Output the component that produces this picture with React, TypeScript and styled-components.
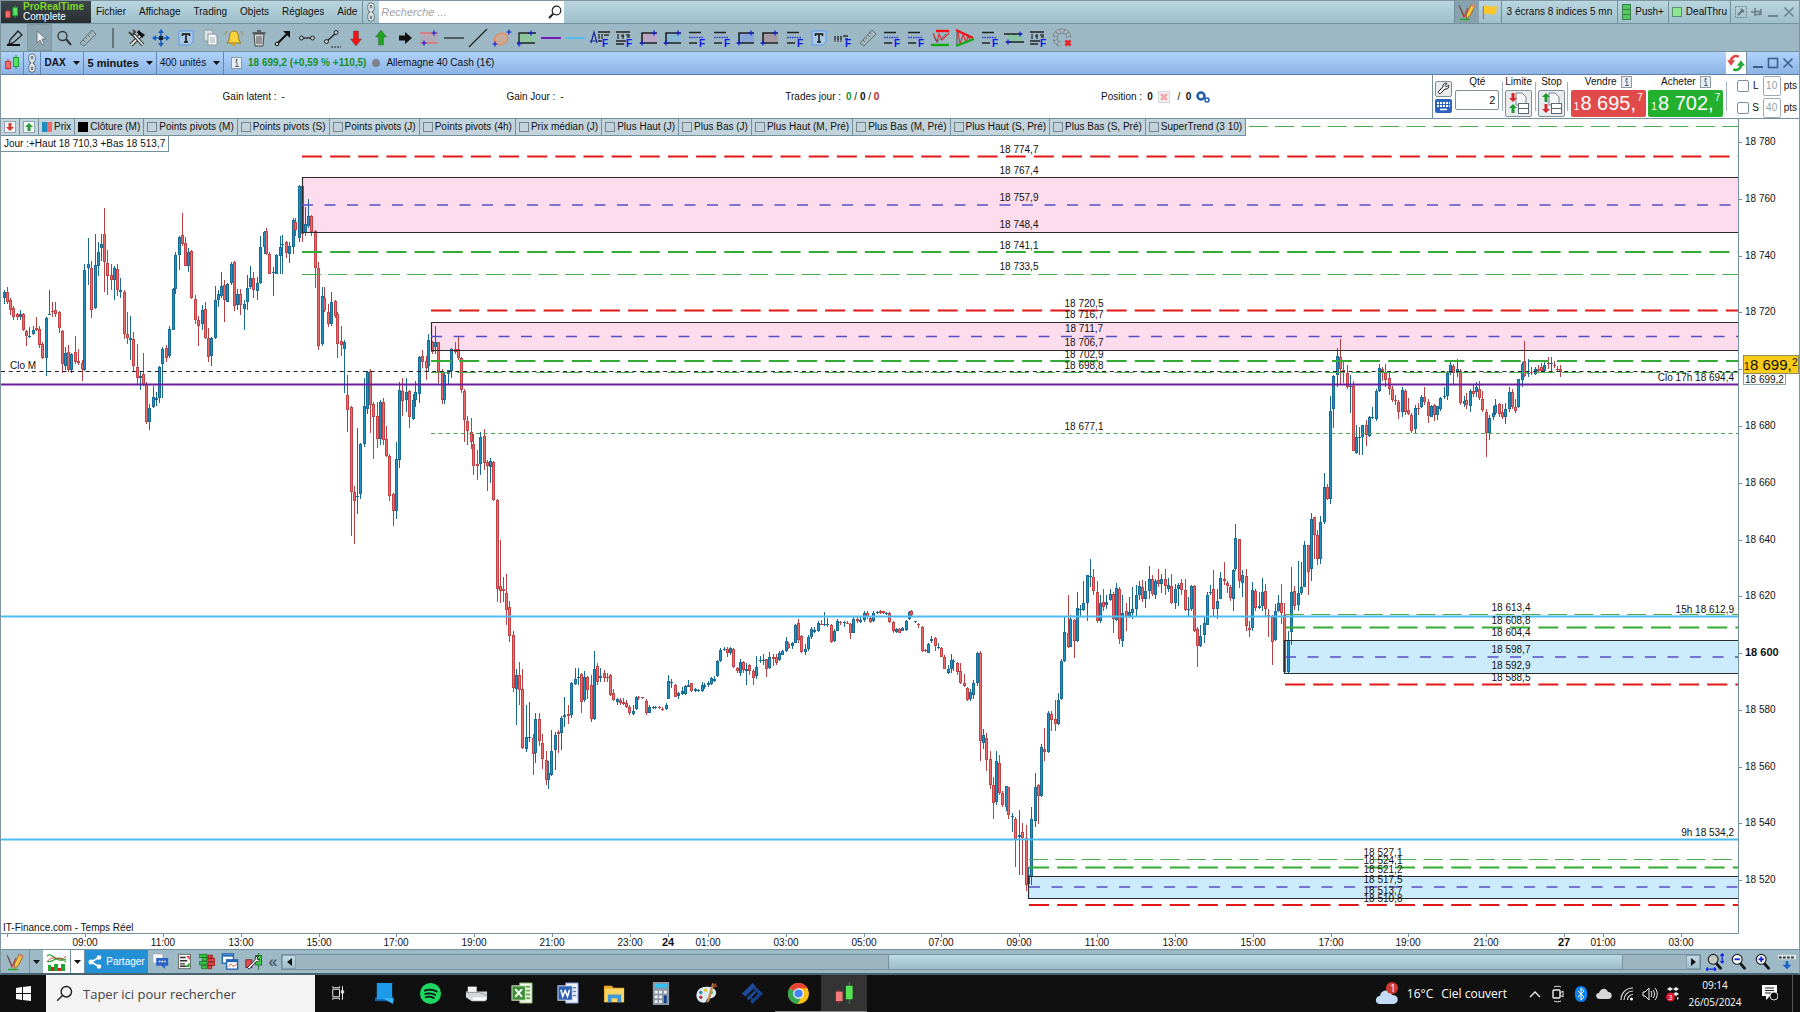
import React from "react";
import styled, { createGlobalStyle, css } from "styled-components";

const SANS = '"Liberation Sans", Arial, sans-serif';
const UI = '"Open Sans", "Noto Sans", sans-serif';
const EDGE = "#73909d";

const Global = createGlobalStyle`
  * { box-sizing: border-box; }
  body { margin: 0; background: #fff; font: 10px/12px ${SANS}; color: #111; }
  button, input, select { font: inherit; color: inherit; margin: 0; padding: 0; border: 0; background: none; border-radius: 0; }
  svg { display: block; flex: none; }
`;

/* ------------------------------------------------------------------ */
/* Layout                                                              */
/* ------------------------------------------------------------------ */

const Screen = styled.div`
  display: flex;
  flex-direction: column;
  height: 100vh;
  overflow: hidden;
`;
const Platform = styled.main`
  flex: 1;
  min-height: 0;
  display: flex;
  flex-direction: column;
  border: 1px solid #7f959f;
  border-bottom: 2px solid #476370;
`;
const MenuBar = styled.header`
  display: flex;
  height: 23px;
  background: linear-gradient(#b9d6e0, #9fbfca);
  border-bottom: 1px solid ${EDGE};
`;
const Brand = styled.div`
  display: flex;
  align-items: center;
  gap: 4px;
  width: 90px;
  padding-left: 3px;
  background: linear-gradient(#3c464b, #272e32);
  color: #fff;
  line-height: 10px;
`;
const BrandName = styled.div`
  color: #7fd62c;
  font-weight: bold;
`;
const Menus = styled.nav`
  display: flex;
  align-items: center;
  gap: 13px;
  padding: 0 5px;
`;
const Search = styled.label`
  display: flex;
  align-items: center;
  width: 185px;
  padding: 0 2px;
  background: #fff;
`;
const SearchInput = styled.input`
  flex: 1;
  min-width: 0;
  outline: none;
  font: italic 11px/14px ${SANS};
  &::placeholder { color: #a4a4a4; opacity: 1; }
`;
const Spacer = styled.div`
  flex: 1;
`;
const Cell = styled.div<{ $pressed?: boolean; $narrow?: boolean }>`
  display: flex;
  align-items: center;
  justify-content: center;
  gap: 4px;
  padding: 0 ${(p) => (p.$narrow ? 3 : 4)}px;
  border-left: 1px solid ${EDGE};
  background: ${(p) => (p.$pressed ? "#87a2ae" : "transparent")};
`;
const CellButton = styled(Cell).attrs({ as: "button" })``;
const Scene = styled(CellButton)`
  padding: 0 5px;
`;
const IconButton = styled.button<{ $pressed?: boolean }>`
  display: flex;
  align-items: center;
  justify-content: center;
  ${(p) => p.$pressed && css`background: #8aa4b0; outline: 1px solid #7d97a3; outline-offset: -1px;`}
`;
const WindowButtons = styled.div`
  display: flex;
  align-items: center;
  gap: 3px;
  padding: 0 5px;
`;

const ToolBar = styled.div`
  height: 28px;
  background: #9bb8c4;
  border-bottom: 1px solid ${EDGE};
`;
const ToolRow = styled.div`
  display: flex;
  max-width: 1074px;
  height: 100%;
  padding-left: 2px;
  & > * { flex: 1; }
`;

const TitleBar = styled.div`
  display: flex;
  height: 23px;
  background: linear-gradient(#b0d3fc, #8db3e4);
  border-bottom: 1px solid #5c80ab;
`;
const TitleCell = styled.div<{ $w: number }>`
  display: flex;
  align-items: center;
  justify-content: center;
  gap: 6px;
  width: ${(p) => p.$w}px;
  border-right: 1px solid #6387b0;
`;
const Pick = styled.select<{ $bold?: boolean; $big?: boolean }>`
  appearance: none;
  font-size: ${(p) => (p.$big ? 11 : 10)}px;
  font-weight: ${(p) => (p.$bold ? "bold" : "normal")};
`;
const Quote = styled.div`
  display: flex;
  align-items: center;
  gap: 6px;
  padding: 0 7px;
`;
const Green = styled.b`
  color: #16912a;
`;
const Red = styled.b`
  color: #c8202a;
`;

const TradeRow = styled.section`
  display: flex;
  height: 44px;
  border-bottom: 1px solid ${EDGE};
`;
const Stats = styled.div`
  flex: 1;
  display: flex;
  align-items: center;
  justify-content: space-evenly;
`;
const Stat = styled.div`
  display: flex;
  align-items: center;
  gap: 5px;
`;
const OrderPanel = styled.form`
  display: flex;
  width: 367px;
  padding: 0 2px;
  gap: 2px;
  border-left: 1px solid ${EDGE};
`;
const Stack = styled.div<{ $w: number }>`
  display: flex;
  flex-direction: column;
  align-items: center;
  gap: 2px;
  width: ${(p) => p.$w}px;
`;
const Tools = styled(Stack)`
  justify-content: center;
`;
const Caption = styled.label`
  display: flex;
  align-items: center;
  gap: 4px;
  height: 13px;
`;
const SquareButton = styled.button`
  display: flex;
  align-items: center;
  justify-content: center;
  width: 17px;
  height: 16px;
  border: 1px solid #7f8d96;
  border-radius: 2px;
  background: #e8ecef;
`;
const OrderButton = styled(SquareButton)`
  width: 27px;
  height: 27px;
`;
const Qty = styled.input`
  width: 44px;
  height: 20px;
  padding-right: 3px;
  border: 1px solid #7d8f9c;
  border-radius: 2px;
  text-align: right;
  font-size: 11px;
`;
const Rule = styled.div`
  width: 1px;
  margin: 7px 0;
  background: #9db0bb;
`;
const PriceButton = styled.button<{ $c: string }>`
  display: flex;
  justify-content: space-between;
  width: 75px;
  height: 27px;
  padding: 0 3px;
  border-radius: 2px;
  background: ${(p) => p.$c};
  color: #fff;
  font-size: 20px;
  line-height: 26px;
  white-space: pre;
`;
const Tiny = styled.small<{ $low?: boolean }>`
  font-size: 10px;
  line-height: ${(p) => (p.$low ? 34 : 16)}px;
`;
const Guards = styled.div`
  display: flex;
  flex-direction: column;
  justify-content: center;
  gap: 2px;
  padding-left: 8px;
`;
const Guard = styled.div`
  display: flex;
  align-items: center;
  gap: 3px;
`;
const GuardLabel = styled.label`
  width: 8px;
  text-align: center;
`;
const GuardBox = styled.input`
  appearance: none;
  width: 12px;
  height: 12px;
  border: 1px solid #7d8f9c;
  border-radius: 2px;
  background: #fff;
`;
const GuardValue = styled.input`
  width: 18px;
  height: 20px;
  border: 1px solid #9aaab4;
  border-radius: 2px;
  color: #90a0aa;
  text-align: center;
`;

const ChartArea = styled.section`
  position: relative;
  flex: 1;
  min-height: 0;
`;
const ChartSvg = styled.svg`
  width: 100%;
  height: 100%;
`;
const Overlay = styled.div`
  position: absolute;
  top: -1px;
  left: 0;
`;
const Legend = styled.div`
  display: flex;
  width: max-content;
  height: 18px;
  border: 1px solid ${EDGE};
  border-left: 0;
  background: #c3d3db;
`;
const LegendItem = styled.label`
  display: flex;
  align-items: center;
  gap: 2px;
  padding: 0 3px;
  white-space: nowrap;
  & + & { border-left: 1px solid ${EDGE}; }
`;
const LegendBox = styled.input`
  appearance: none;
  width: 10px;
  height: 10px;
  border: 1px solid #75858e;
  &:checked { border: 0; background: #000; }
`;
const PriceBox = styled(LegendBox)`
  &:checked { background: linear-gradient(90deg, #1a8cc0 50%, #f06a6a 50%); }
`;
const DayRange = styled.div`
  width: max-content;
  height: 16px;
  padding: 2px 3px;
  border: 1px solid ${EDGE};
  border-top: 0;
  border-left: 0;
  background: #fff;
`;

const BottomBar = styled.footer`
  display: flex;
  height: 24px;
  border-top: 1px solid ${EDGE};
  background: #9cb9c5;
`;
const BottomButton = styled.button<{ $w: number; $white?: boolean }>`
  display: flex;
  align-items: center;
  justify-content: center;
  width: ${(p) => p.$w}px;
  background: ${(p) => (p.$white ? "#fff" : "none")};
  border-right: ${(p) => (p.$white ? `1px solid ${EDGE}` : 0)};
  font-size: 16px;
  color: #35444c;
`;
const Share = styled.button`
  display: flex;
  align-items: center;
  justify-content: center;
  gap: 4px;
  width: 63px;
  background: #2490d6;
  color: #fff;
`;
const ScrollBar = styled.div`
  flex: 1;
  display: flex;
  height: 16px;
  margin: 4px 2px 0 0;
  border: 1px solid ${EDGE};
  background: #9cb6c2;
`;
const ScrollEnd = styled.button`
  display: flex;
  align-items: center;
  justify-content: center;
  width: 14px;
  border: 1px solid #86a0ad;
  background: linear-gradient(#c3dbe4, #a0bdc9);
`;
const Track = styled.div`
  flex: 1;
  display: grid;
  grid-template-columns: 592fr 736fr 63fr;
`;
const Thumb = styled.div`
  grid-column: 2;
  border: solid ${EDGE};
  border-width: 0 1px;
  background: linear-gradient(#bcdbe6, #9dbcc9);
`;

const TaskBar = styled.footer`
  display: flex;
  align-items: stretch;
  height: 37px;
  background: #101010;
  color: #fff;
  font-family: ${UI};
`;
const TaskSearch = styled.label`
  display: flex;
  align-items: center;
  gap: 10px;
  width: 269px;
  padding: 0 10px;
  background: #f3f3f3;
`;
const TaskInput = styled.input`
  flex: 1;
  min-width: 0;
  outline: none;
  font-size: 13px;
  line-height: 20px;
  &::placeholder { color: #444; opacity: 1; }
`;
const TaskButton = styled.button<{ $active?: boolean; $line?: boolean }>`
  display: flex;
  align-items: center;
  justify-content: center;
  width: 46px;
  background: ${(p) => (p.$active ? "#343434" : "none")};
  border-bottom: 1px solid ${(p) => (p.$line ? "#8a8a8a" : "transparent")};
`;
const Tray = styled.div`
  display: flex;
  align-items: center;
`;
const TrayButton = styled(IconButton)`
  width: 23px;
`;
const Weather = styled.button`
  display: flex;
  align-items: center;
  gap: 8px;
  margin-right: 16px;
  font-size: 12px;
`;
const Clock = styled.time`
  width: 62px;
  font-size: 10px;
  line-height: 17px;
  text-align: center;
`;
const ShowDesktop = styled.button`
  width: 8px;
  border-left: 1px solid #555;
`;

/* ------------------------------------------------------------------ */
/* Icons                                                               */
/* ------------------------------------------------------------------ */

type IconProps = { w?: number; h?: number; box?: string; children: React.ReactNode };
const Icon = ({ w = 20, h = 20, box = "0 0 20 20", children }: IconProps) => (
  <svg width={w} height={h} viewBox={box} fill="none" aria-hidden="true">{children}</svg>
);
const Caret = () => <Icon w={7} h={4} box="0 0 7 4"><path d="M0 0h7L3.500 4z" fill="#111" /></Icon>;
const Link = () => (
  <Icon w={10} h={20} box="0 0 10 20">
    <g stroke="#4d5a61" strokeWidth="3"><rect x="3" y="2" width="4" height="6.500" rx="2" /><rect x="3" y="11.500" width="4" height="6.500" rx="2" /><path d="M5 6v8" /></g>
    <g stroke="#eef2f4" strokeWidth="1.500"><rect x="3" y="2" width="4" height="6.500" rx="2" /><rect x="3" y="11.500" width="4" height="6.500" rx="2" /><path d="M5 6v8" /></g>
  </Icon>
);
const Candles = ({ s = 16 }: { s?: number }) => (
  <Icon w={s} h={s} box="0 0 16 16">
    <path d="M4 4v11" stroke="#c03a3a" /><rect x="1.500" y="6.500" width="5" height="7" fill="#f46c6c" stroke="#c03a3a" />
    <path d="M12 0v14" stroke="#1e9e30" /><rect x="9.500" y="2.500" width="5" height="9" fill="#58e060" stroke="#1e9e30" />
  </Icon>
);
const Lens = ({ dark = "#222", s = 14 }: { dark?: string; s?: number }) => (
  <Icon w={s} h={s} box="0 0 14 14"><circle cx="8.500" cy="5.500" r="4.300" stroke={dark} strokeWidth="1.200" /><path d="M5.300 8.700L1 13" stroke={dark} strokeWidth={s > 14 ? 1.2 : 2} /></Icon>
);
const PencilChart = () => (
  <Icon w={18} h={18} box="0 0 18 18">
    <path d="M2 4l4 10 4-9" stroke="#c33" strokeWidth="1.200" /><path d="M2 16.500h10" stroke="#2a2" strokeWidth="1.400" /><path d="M1 2l5 11" stroke="#555" />
    <path d="M13.500 1l3.500 2-5 10-3.500 2.500V11z" fill="#f6c544" stroke="#8a5a10" strokeWidth=".8" /><path d="M14 1l3 2-1 2-3-2z" fill="#e88" />
  </Icon>
);
const InfoMark = () => (
  <Icon w={11} h={12} box="0 0 11 12"><rect x=".5" y=".5" width="10" height="11" fill="#e9eef2" stroke="#8c9aa4" /><path d="M4 5h2v4M4 9.500h4M5 2.500h1.200v1H5z" stroke="#5a6873" /></Icon>
);
const Cross = ({ c }: { c: string }) => <Icon w={12} h={12} box="0 0 12 12"><path d="M1.500 1.500l9 9M10.500 1.500l-9 9" stroke={c} strokeWidth="1.600" /></Icon>;
const Mini = ({ c }: { c: string }) => <Icon w={12} h={12} box="0 0 12 12"><path d="M1 10h10" stroke={c} strokeWidth="2" /></Icon>;
const Maxi = ({ c }: { c: string }) => <Icon w={12} h={12} box="0 0 12 12"><rect x="1.500" y="1.500" width="9" height="9" stroke={c} strokeWidth="1.600" /></Icon>;

const BlueF = () => <text x="12" y="19" fontSize="10" fontWeight="bold" fill="#0d17e8" fontFamily={SANS}>F</text>;
const Plus = ({ x, y }: { x: number; y: number }) => <path d={`M${x - 2.5} ${y}h5M${x} ${y - 2.5}v5`} stroke="#1020e0" strokeWidth="1.200" />;
const Fib = () => <><path d="M2 4.500h12M2 15h8" stroke="#222" strokeWidth="1.500" /><path d="M2 9.500h15" stroke="#2b38d0" strokeWidth="1.400" strokeDasharray="1.500 1" /><BlueF /></>;
const Stats3 = () => <><path d="M2 4h14M2 13h10M2 16h8" stroke="#222" strokeWidth="1.300" /><path d="M4 6v5M7 8h3M9 6v5M12 7h4M13 9h3" stroke="#333" strokeWidth="1.300" /><BlueF /></>;
const BoxTool = ({ fill }: { fill: string }) => <><rect x="3" y="5" width="15" height="10" fill={fill} /><path d="M3 15V5h15M1 15h17" stroke="#222" strokeWidth="1.600" /><Plus x={15} y={5} /><Plus x={3} y={15} /></>;
const TextTool = () => <><path d="M3 3h14v11l-3 3H3z" fill="#a9c6e2" stroke="#5e9af0" /><path d="M6.500 8V6h7v2M10 6v8M8 14h4" stroke="#111" strokeWidth="1.500" /></>;
const Ruler = () => <><path d="M2 15L14 2l4 4L6 18z" fill="#a6b7bf" stroke="#5f6e77" /><path d="M5 12l2 2M7.500 9.500l1.500 1.500M10 7l2 2M12 4.500l1.500 1.500" stroke="#5f6e77" /></>;
const VArrow = ({ up, c }: { up?: boolean; c: string }) => <path d={up ? "M10 2l5.500 7h-3v8h-5V9h-3z" : "M10 18l5.500-7h-3V3h-5v8h-3z"} fill={c} stroke="#444" strokeWidth=".4" />;

const tools: [string, React.ReactNode][] = [
  ["Crayon", <><path d="M5 12L13 3l4 4-9 8-4 1z" stroke="#222" strokeWidth="1.300" /><path d="M2 17h13" stroke="#111" strokeWidth="2" /></>],
  ["Sélection", <path d="M7 3v12l3-3 2 5 2-1-2-5h4z" fill="#e8eef0" stroke="#6b7980" />],
  ["Zoom", <><circle cx="8.500" cy="8" r="4.500" stroke="#333" strokeWidth="1.300" /><path d="M12 11l5 6" stroke="#333" strokeWidth="2" /></>],
  ["Règle", <Ruler />],
  ["", <path d="M10 0v20" stroke="#333" />],
  ["Outils", <><path d="M4 17L14 7" stroke="#333" strokeWidth="4" /><path d="M4 17L14 7" stroke="#e4e4e4" strokeWidth="2" /><path d="M12 2c2 3 4 3 6 5l-3 3c-1-2-4-3-5-6z" fill="#111" /><path d="M6 6l10 11" stroke="#333" strokeWidth="3.500" /><path d="M7 7l9 10" stroke="#f4f4f4" strokeWidth="1.500" /><path d="M2 4l3 3 3-3-2-2" stroke="#444" strokeWidth="2" /></>],
  ["Déplacer", <><path d="M10 3v14M3 10h14" stroke="#1c5fc4" strokeWidth="1.600" strokeDasharray="5 4" /><path d="M10 1l3 4H7zM10 19l3-4H7zM1 10l4-3v6zM19 10l-4-3v6z" fill="#1c5fc4" /><rect x="8" y="8" width="4" height="4" fill="#123" /></>],
  ["Texte", <TextTool />],
  ["Copier", <><path d="M4 2h7l2 2v9H4z" fill="#d8dfe3" stroke="#8a9aa3" /><path d="M8 6h7l2 2v9H8z" fill="#f3f5f6" stroke="#8a9aa3" /><path d="M10 10h5M10 12h5M10 14h5" stroke="#a3b1b9" /></>],
  ["Alerte", <><path d="M3 15c3-2 2-6 3-9 1-4 7-4 8 0 1 3 0 7 3 9z" fill="#f7d23a" stroke="#9a7a10" /><circle cx="10" cy="16.500" r="1.800" fill="#d0a018" /><path d="M3 3L1 7M17 3l2 4" stroke="#a58a2a" /></>],
  ["Corbeille", <><path d="M5 6h10l-1 12H6z" fill="#cfd5d8" stroke="#444" /><path d="M3.500 5h13M8 3h4" stroke="#444" strokeWidth="1.600" /><path d="M8 8v8M10 8v8M12 8v8" stroke="#555" /></>],
  ["Flèche", <><path d="M4 16L14 6" stroke="#111" strokeWidth="2" /><path d="M10 3h7v7z" fill="#111" /><circle cx="4" cy="16" r="1.800" fill="#ccc" stroke="#111" /></>],
  ["Segment", <><path d="M5 10h10" stroke="#222" strokeWidth="1.300" /><circle cx="4.500" cy="10" r="2" fill="#b8c8d0" stroke="#222" /><circle cx="15.500" cy="10" r="2" fill="#b8c8d0" stroke="#222" /></>],
  ["Prolongement", <><path d="M4 14L14 5" stroke="#222" strokeWidth="1.300" /><circle cx="4.500" cy="13.500" r="2" fill="#b8c8d0" stroke="#222" /><circle cx="14" cy="4.500" r="2" fill="#b8c8d0" stroke="#222" /><path d="M9 19h10" stroke="#222" strokeDasharray="2 1" /></>],
  ["Flèche bas", <VArrow c="#ee1515" />],
  ["Flèche haut", <VArrow up c="#20a520" />],
  ["Flèche droite", <path d="M4 7.500h6V4l7 6-7 6v-3.500H4z" fill="#111" />],
  ["Canal", <><rect x="2" y="5" width="16" height="10" fill="#b1a9b8" /><path d="M1 5h18M1 15h18" stroke="#e07070" strokeWidth="1.300" /><Plus x={15} y={5} /><Plus x={5} y={15} /></>],
  ["Ligne horizontale", <path d="M0 10h20" stroke="#333" strokeWidth="1.400" />],
  ["Droite", <path d="M1 19L19 1" stroke="#222" strokeWidth="1.200" />],
  ["Ellipse", <><ellipse cx="9" cy="11" rx="7" ry="5.500" transform="rotate(-25 9 11)" fill="#c9a99a" stroke="#e88a5a" strokeWidth="1.300" /><Plus x={17} y={4} /><Plus x={3} y={16} /></>],
  ["Zone verte", <><rect x="2" y="5" width="16" height="10" fill="#8cc5a0" /><path d="M2 15V5h17M0 15h18" stroke="#222" strokeWidth="1.400" /><Plus x={14} y={5} /><Plus x={2} y={16} /></>],
  ["Ligne violette", <path d="M0 10h20" stroke="#7a1ab8" strokeWidth="2" />],
  ["Ligne bleue", <path d="M0 10h20" stroke="#43bdf7" strokeWidth="1.600" />],
  ["Statistiques A", <><path d="M1 15L4 4l3 11M0 13h7" stroke="#1b2a9a" strokeWidth="1.200" /><path d="M8 4h12M8 13h4" stroke="#222" strokeWidth="1.300" /><path d="M9 6v5M12 6v5M14 7h5" stroke="#333" strokeWidth="1.300" /><BlueF /></>],
  ["Statistiques", <Stats3 />],
  ["Zone rose", <BoxTool fill="#b8a6c4" />],
  ["Zone cyan", <BoxTool fill="#88b9d4" />],
  ["Fibonacci 1", <Fib />],
  ["Fibonacci 2", <Fib />],
  ["Zone bleue", <BoxTool fill="#86a5d8" />],
  ["Zone grise", <BoxTool fill="#a69aa2" />],
  ["Fibonacci 3", <Fib />],
  ["Note", <TextTool />],
  ["Étiquette", <><path d="M2 8v4M5 8v4M8 8v4M10 8h5M12 11h3" stroke="#333" strokeWidth="1.500" /><path d="M1 13h9" stroke="#333" strokeDasharray="2 1" /><BlueF /></>],
  ["Mesure", <Ruler />],
  ["Fibonacci 4", <Fib />],
  ["Fibonacci 5", <Fib />],
  ["Figure W", <><path d="M2 5l4 9 2-8 3 6 7-7" stroke="#d33" strokeWidth="1.200" /><path d="M3 9l3 5 9-8" stroke="#555" strokeWidth=".8" /><path d="M5 3h13" stroke="#e11" strokeWidth="2.400" /><path d="M0 17h18" stroke="#1a1" strokeWidth="2.400" /></>],
  ["Triangle", <><path d="M3 4l2 12 3-9 3 7 2-5 3 4" stroke="#d33" strokeWidth="1.200" /><path d="M2 4v13" stroke="#333" strokeWidth=".8" /><path d="M1 2l17 8" stroke="#e11" strokeWidth="2.400" /><path d="M1 18l18-7" stroke="#1a1" strokeWidth="2.400" /></>],
  ["Fibonacci 6", <Fib />],
  ["Canal vert", <><rect x="3" y="6" width="15" height="8" fill="#88c4a4" /><path d="M0 6h18M2 14h18" stroke="#222" strokeWidth="1.500" /><Plus x={16} y={6} /><Plus x={4} y={14} /></>],
  ["Statistiques B", <Stats3 />],
  ["Aimant", <><path d="M8 16c-4 0-6-3-6-6.500S5 3 9 3s7 3 7 7" stroke="#6f7d85" strokeWidth="5" /><path d="M8 16c-4 0-6-3-6-6.500S5 3 9 3s7 3 7 7" stroke="#a9b8bf" strokeWidth="3.600" strokeDasharray="3 .8" /><path d="M12.500 12.500l5 5M17.500 12.500l-5 5" stroke="#e22" strokeWidth="2.800" /></>],
];

/* ------------------------------------------------------------------ */
/* Chart data                                                          */
/* ------------------------------------------------------------------ */

type Session = { x: number; y: number; kx: number; ky: number; bars: string };

// One bar is "time high open close low", in the units of its session.
const sessions: Session[] = [
  {
    x: 0, y: 155, kx: 3, ky: 3,
    bars: `14 405 430 412 446|21 396 410 441 446|31 428 436 464 480|41 454 458 486 496|51 474 478 486 496|61 466 486 478 496|70 474 478 526 528|80 524 528 544 572|88 516 546 544 548|100 512 538 524 540|108 486 520 524 528|119 512 522 570 578|128 560 568 608 612|139 486 608 488 662|148 404 478 476 480|158 440 468 470 486|167 440 466 476 486|178 468 470 520 534|188 524 528 628 654|196 576 632 594 644|205 570 590 644 650|214 594 644 598 654|226 542 592 622 628|236 582 618 624 630|246 616 624 642 678|254 328 644 344 648|265 248 338 326 390|275 318 338 464 488|285 236 458 330 462|294 262 334 290 364|304 236 280 268 318|313 160 236 322 412|323 284 324 362 420|333 326 360 374 404|342 334 376 338 434|352 326 342 406 422|361 370 412 406 428|373 404 410 538 552|381 470 536 550 566|391 484 556 550 614|400 532 552 634 652|412 568 636 670 688|421 652 668 664 706|431 594 656 690 692|440 680 688 802 808|448 746 802 760 826|460 692 756 726 760|468 712 734 728 752|479 632 728 636 744|488 576 628 582 730|499 570 578 608 622|507 514 604 522 608|519 400 524 402 526|527 292 402 300 416|538 244 300 246 344|547 174 240 268 272|556 246 264 332 334|565 278 332 290 350|574 286 288 428 432|586 420 432 494 506|595 484 496 514 574|606 450 508 466 524|615 440 462 548 552|626 518 550 606 620|634 546 604 550 634|646 392 550 436 552|654 406 436 418 456|665 350 424 392 428|674 374 390 436 500|682 384 440 388 442|693 322 384 326 390|702 318 322 454 468|712 402 450 418 464|721 402 416 450 480|733 434 462 448 524|741 360 442 400 466|751 332 396 368 402|761 352 368 404 428|772 366 408 384 436|781 244 384 276 386|792 228 276 230 296|800 220 228 298 300|808 292 296 356 358|821 336 352 350 424|829 296 356 300 358|840 242 304 276 356|848 240 268 266 356|858 258 260 294 310|868 260 296 272 324|879 188 276 196 298|887 190 200 226 242|898 90 248 92 260|907 90 92 238 262|916 156 234 206 242|926 132 212 182 220|935 180 184 230 242|947 226 228 338 400|956 320 340 574 584|966 396 566 424 572|974 396 430 466 472|986 446 470 508 516|994 410 506 442 512|1006 436 438 484 490|1013 472 478 566 608|1024 514 558 570 602|1034 556 582 560 714|1042 660 720 764 830|1053 752 756 1010 1142|1062 992 1012 1038 1168|1073 820 1026 1022 1076|1081 864 1018 866 1032|1092 668 866 752 876|1101 648 762 652 776|1112 642 648 750 834|1121 742 746 786 912|1132 740 782 852 878|1140 736 852 740 870|1151 730 742 854 870|1160 814 852 902 906|1169 898 902 1024 1038|1181 1014 1018 1068 1112|1189 860 1068 912 1092|1199 680 916 704 938|1208 668 708 738 784|1219 668 734 712 770|1228 704 708 786 818|1239 718 792 734 796|1247 678 736 712 756|1258 602 718 606 744|1267 586 604 620 638|1278 602 618 640 676|1286 536 634 554 650|1296 558 560 590 596|1306 512 576 560 598|1316 560 562 650 684|1326 642 652 736 746|1334 654 736 660 748|1345 644 656 646 686|1355 580 648 582 668|1365 562 582 590 596|1374 546 582 608 616|1385 606 610 706 714|1393 702 708 794 860|1402 782 798 828 870|1413 790 832 862 882|1421 836 866 934 960|1432 884 928 934 974`,
  },
  {
    x: 400, y: 300, kx: 3, ky: 3,
    bars: `242 396 492 412 526|253 388 408 488 510|261 480 486 498 574|271 474 500 484 548|281 484 486 600 602|292 598 600 866 906|300 720 858 872 908|311 830 866 872 906|320 822 878 930 976|329 904 922 1008 1026|340 992 1006 1164 1176|348 1106 1166 1124 1274|358 1086 1126 1170 1214|368 1106 1168 1344 1348|380 1216 1346 1312 1356|388 1206 1314 1312 1326|400 1302 1314 1362 1424|407 1240 1358 1256 1388|418 1238 1256 1324 1338|427 1302 1328 1376 1406|438 1354 1380 1440 1454|446 1382 1440 1420 1466|455 1290 1424 1354 1428|467 1296 1350 1304 1410|475 1290 1296 1302 1358|485 1248 1298 1254 1350|494 1190 1252 1244 1282|506 1214 1242 1248 1272|515 1146 1246 1148 1254|526 1104 1152 1136 1154|534 1104 1134 1130 1156|544 1120 1122 1206 1240|553 1112 1200 1130 1206|562 1128 1132 1170 1196|573 1124 1154 1258 1266|582 1054 1256 1106 1260|593 1088 1098 1146 1154|601 1104 1134 1128 1146|613 1110 1120 1134 1146|621 1118 1130 1134 1146|632 1122 1124 1184 1188|641 1168 1178 1200 1202|652 1194 1206 1198 1216|660 1194 1200 1208 1216|671 1194 1206 1212 1214|679 1200 1208 1220 1224|688 1214 1222 1238 1246|699 1216 1242 1232 1244|708 1188 1228 1190 1230|716 1188 1190 1194 1200|727 1190 1192 1194 1196|740 1198 1202 1238 1244|748 1214 1238 1222 1240|759 1218 1224 1222 1228|767 1218 1222 1220 1226|778 1218 1222 1224 1226|787 1222 1226 1228 1232|799 1208 1228 1216 1230`,
  },
  {
    x: 660, y: 540, kx: 2.6133, ky: 3,
    bars: `23 406 476 424 478|31 416 430 426 444|40 432 434 470 472|48 456 468 460 478|58 440 462 454 464|66 434 462 438 466|74 420 440 436 442|82 428 430 454 456|92 444 452 448 456|100 446 451 449 456|110 426 452 434 456|117 428 442 434 446|126 422 434 428 440|134 410 432 414 436|142 408 424 416 426|151 360 408 364 410|159 324 364 330 366|168 322 330 326 334|176 322 326 338 350|184 320 340 324 346|192 324 326 380 384|202 380 384 392 400|210 358 400 366 408|219 364 366 390 400|227 370 392 386 436|235 372 374 394 404|244 386 394 414 436|252 348 408 380 416|262 348 364 360 370|270 342 363 361 374|278 356 358 388 410|286 336 384 352 388|296 342 350 356 378|304 342 350 370 376|312 334 360 338 362|321 330 344 334 346|330 292 334 302 336|337 306 312 324 328|345 306 318 308 326|354 252 308 256 310|362 236 248 300 310|371 284 288 336 338|379 312 336 326 344|388 284 328 290 332|397 260 292 268 298|405 262 276 270 280|413 242 272 248 276|422 240 251 253 256|430 216 254 252 258|439 234 255 253 262|447 252 256 306 308|455 268 304 274 306|464 238 272 242 274|472 242 246 250 254|481 242 248 246 262|490 244 248 250 252|498 248 252 280 296|506 230 278 236 280|515 228 238 242 248|524 232 246 240 250|534 212 240 218 246|541 214 220 232 236|550 230 234 246 250|559 214 244 218 246|568 212 220 216 222|576 210 212 220 222|584 212 214 220 222|592 216 222 218 226|600 216 218 246 250|609 244 246 274 278|617 264 276 268 278|626 264 266 278 280|634 260 272 264 274|643 240 270 242 272|651 212 238 216 240|658 210 212 226 228|668 243 246 244 248|676 250 252 256 264|685 258 260 334 336|693 326 330 334 336|702 308 338 312 338|710 288 304 296 308|719 292 294 318 334|727 310 324 320 328|736 320 324 350 352|744 346 350 386 388|753 374 398 388 402|761 342 386 360 398|768 358 366 362 392|778 366 368 396 406|786 368 394 430 432|796 402 430 438 442|803 442 444 480 482|812 446 478 456 482|820 420 464 430 478|829 336 428 338 438|837 334 338 604 662|846 566 610 586 626|854 578 594 660 692|864 634 656 734 746|872 710 734 788 836|879 634 786 662 796|888 646 670 758 766|896 752 758 794 800|905 738 800 738 812|912 740 742 826 836|922 820 830 828 876|930 830 836 896 980|939 810 892 886 1004|948 850 876 894 1006|957 856 894 1034 1052|964 980 1032 1006 1036|972 800 1012 836 1034|981 700 844 742 860|989 732 736 768 852|998 612 768 620 770|1006 564 626 636 664|1016 514 636 518 638|1024 512 522 540 574|1033 480 536 552 572|1041 460 552 480 556|1050 356 478 362 480|1057 230 362 276 366|1067 166 278 320 324|1074 224 320 236 322|1082 236 240 304 354|1091 156 304 204 306|1099 196 210 208 228|1108 122 210 188 214|1117 104 188 106 242|1126 58 109 107 140|1134 86 112 154 164|1143 124 156 244 250|1151 164 244 190 250|1160 148 186 200 214|1168 166 196 186 206|1177 148 180 162 182|1186 156 162 238 280|1192 130 240 144 242|1202 140 148 298 312|1209 166 302 220 322|1219 188 214 228 272|1227 170 228 216 234|1236 140 218 206 236|1244 136 206 164 228|1253 122 164 138 180|1261 120 140 178 186|1270 122 178 154 204|1278 78 152 118 178|1287 106 118 162 168|1294 116 164 122 176|1303 88 120 132 142|1311 102 132 118 160|1320 88 116 138 164|1328 114 148 136 156|1337 102 138 190 192|1346 132 188 148 206|1354 130 146 134 198|1363 116 130 150 166|1372 118 150 210 214|1380 170 210 208 230|1388 134 208 138 212|1396 136 138 272 276|1405 260 268 318 380|1413 254 318 288 322|1422 230 284 248 308|1430 156 254 164 256|1439 134 160 156 166|1447 90 148 206 232|1456 148 208 182 238|1465 96 176 114 178|1474 66 116 122 136|1482 124 128 138 160|1492 134 142 174 184|1499 86 178 90 212`,
  },
  {
    x: 1200, y: 320, kx: 2.6133, ky: 3,
    bars: `94 612 748 654 752|103 656 658 784 804|111 750 790 766 830|121 748 768 918 934|129 902 924 930 950|138 786 924 810 934|145 808 812 864 874|155 816 864 858 868|163 774 858 816 874|172 792 812 868 892|180 868 884 892 950|190 886 890 966 1036|198 852 960 874 962|205 824 874 850 876|214 792 850 878 912|222 850 884 1056 1060|231 934 1056 960 1058|239 742 936 816 976|248 798 812 858 870|257 724 856 820 872|265 726 820 800 824|273 664 800 676 802|283 674 676 756 826|291 580 748 598 784|299 590 592 644 716|308 630 646 716 734|315 588 718 606 732|325 458 606 500 612|333 492 500 536 540|342 228 536 272 552|349 164 268 168 324|359 84 166 108 200|367 58 110 146 196|376 122 150 160 190|385 136 158 202 206|393 164 202 198 278|401 182 198 392 394|408 314 398 350 402|417 320 352 350 406|425 316 350 316 404|435 300 316 344 378|442 288 348 290 350|451 262 294 292 298|460 206 298 212 302|469 132 214 144 216|478 140 148 160 182|486 132 158 180 200|494 158 174 208 224|503 198 206 240 246|511 224 240 242 256|519 240 246 276 298|528 200 276 210 292|536 206 212 276 284|545 234 270 282 286|553 280 284 332 338|562 256 328 264 340|570 248 264 268 284|578 226 260 230 264|587 200 230 246 256|596 238 246 288 310|604 256 290 258 292|613 252 256 284 302|620 258 286 258 300|628 230 266 234 272|638 202 232 228 236|646 154 228 160 240|655 124 160 134 166|663 132 138 158 196|672 116 158 148 170|680 146 154 248 254|690 228 252 244 262|697 220 240 254 266|706 208 258 214 276|715 196 212 222 232|723 186 216 202 230|731 184 208 234 240|739 214 236 270 276|748 266 276 340 410|757 284 340 294 360|766 258 290 280 300|773 238 280 254 286|782 250 252 282 290|791 252 276 290 296|799 248 290 268 312|808 200 268 216 276|817 206 216 262 266|824 236 262 272 278|832 176 260 178 264|842 126 180 132 202|849 62 124 168 172|858 116 162 160 170|867 142 156 160 164|876 142 162 148 164|884 134 146 154 158|893 128 140 152 154|900 126 152 134 154|910 112 128 132 146|918 110 130 128 152|927 122 134 136 144|935 138 146 148 154|943 136 146 156 172`,
  },
];

const bars = sessions.flatMap((s) =>
  s.bars.split("|").map((row) => {
    const [t, h, o, c, l] = row.split(" ").map(Number);
    const y = (v: number) => s.y + v / s.ky;
    return { x: Math.round(s.x + t / s.kx - 0.5), high: y(h), open: y(o), close: y(c), low: y(l) };
  }),
);

type Level = { from: number; y: number; kind: "red" | "green" | "thin" | "mid" | "dots" };
const strokes = {
  red: { stroke: "#e21818", strokeWidth: 2, strokeDasharray: "20 8.150" },
  green: { stroke: "#34ab34", strokeWidth: 2, strokeDasharray: "20 8.150" },
  thin: { stroke: "#4cab4c", strokeWidth: 1, strokeDasharray: "19 7.300" },
  mid: { stroke: "#5450c4", strokeWidth: 1.4, strokeDasharray: "11 11.500" },
  dots: { stroke: "#4ca24c", strokeWidth: 1, strokeDasharray: "4 3.500" },
};
const levels: Level[] = [
  { from: 302, y: 126.5, kind: "thin" },
  { from: 302, y: 156.5, kind: "red" }, { from: 302, y: 205, kind: "mid" }, { from: 302, y: 252, kind: "green" }, { from: 302, y: 274.5, kind: "thin" },
  { from: 431, y: 310.5, kind: "red" }, { from: 431, y: 336.5, kind: "mid" }, { from: 431, y: 361, kind: "green" }, { from: 431, y: 372.5, kind: "thin" }, { from: 431, y: 433.5, kind: "dots" },
  { from: 1029, y: 859.5, kind: "thin" }, { from: 1029, y: 867.5, kind: "green" }, { from: 1029, y: 887, kind: "mid" }, { from: 1029, y: 905, kind: "red" },
  { from: 1285, y: 614.5, kind: "thin" }, { from: 1285, y: 627.5, kind: "green" }, { from: 1285, y: 657, kind: "mid" }, { from: 1285, y: 684.5, kind: "red" },
];
const zones = [
  { from: 302, top: 177.5, bottom: 232.5, fill: "#fddcee" },
  { from: 431, top: 322.5, bottom: 350.5, fill: "#fddcee" },
  { from: 1028, top: 876.5, bottom: 898.5, fill: "#ccebfc" },
  { from: 1284, top: 640.5, bottom: 673.5, fill: "#ccebfc" },
];
const tags: [number, [string, number][]][] = [
  [1019, [["18 774,7", 156], ["18 767,4", 177], ["18 757,9", 204], ["18 748,4", 231], ["18 741,1", 252], ["18 733,5", 273]]],
  [1084, [["18 720,5", 310], ["18 716,7", 321], ["18 711,7", 335], ["18 706,7", 349], ["18 702,9", 361], ["18 698,8", 372], ["18 677,1", 433]]],
  [1511, [["18 613,4", 614], ["18 608,8", 627], ["18 604,4", 639], ["18 598,7", 656], ["18 592,9", 672], ["18 588,5", 684]]],
  [1383, [["18 527,1", 859], ["18 524,1", 867], ["18 521,2", 876], ["18 517,5", 886], ["18 513,7", 897], ["18 510,8", 905]]],
];
const prices = [780, 760, 740, 720, 700, 680, 660, 640, 620, 600, 580, 560, 540, 520];
const hours = ["09:00", "11:00", "13:00", "15:00", "17:00", "19:00", "21:00", "23:00", "01:00", "03:00", "05:00", "07:00", "09:00", "11:00", "13:00", "15:00", "17:00", "19:00", "21:00"];
const timeTicks: [string, number, boolean?][] = [
  ...hours.map((h, i): [string, number] => [h, Math.round(85 + i * 77.85)]),
  ["24", 668, true], ["27", 1564, true], ["01:00", 1603], ["03:00", 1681],
];

const Chart = () => (
  <ChartSvg viewBox="1 119 1798 830" preserveAspectRatio="none" fontFamily={SANS} fontSize="10" fill="#111" role="img" aria-label="DAX, 5 minutes">
    <rect x="1" y="119" width="1798" height="830" fill="#fff" />
    {zones.map((z) => <rect key={z.top} x={z.from} y={z.top} width={1738 - z.from} height={z.bottom - z.top} fill={z.fill} />)}
    <g shapeRendering="crispEdges">
      {bars.map((b, i) => {
        const up = b.close < b.open;
        const top = Math.min(b.open, b.close);
        const height = Math.max(1, Math.abs(b.open - b.close));
        return (
          <g key={i}>
            <rect x={b.x} y={b.high} width="1" height={b.low - b.high} fill={up ? "#1a6a90" : "#b64043"} />
            <rect x={b.x - 1} y={top} width="3" height={height} fill={up ? "#176c96" : "#c24346"} />
            {height > 2 && <rect x={b.x} y={top + 1} width="1" height={height - 2} fill={up ? "#1e90c4" : "#ec6c6c"} />}
          </g>
        );
      })}
    </g>
    {zones.map((z) => <path key={z.top} d={`M1738 ${z.top}H${z.from + 0.5}V${z.bottom}H1738`} fill="none" stroke="#2b2b2b" strokeWidth="1.200" />)}
    {levels.map((l) => <path key={l.y} d={`M${l.from} ${l.y}H1738`} {...strokes[l.kind]} />)}
    <path d="M1 371.500H1738" stroke="#222" strokeWidth="1" strokeDasharray="4 3.700" />
    <path d="M1 384.500H1738" stroke="#6b1f9c" strokeWidth="2" />
    <path d="M1 616.500H1738M1 839.500H1738" stroke="#4cbbf2" strokeWidth="2" />
    <g textAnchor="middle">
      {tags.map(([x, rows]) => rows.map(([t, y]) => <text key={t} x={x} y={y - 3}>{t}</text>))}
    </g>
    <g textAnchor="end"><text x="1734" y="381">Clo 17h 18 694,4</text><text x="1734" y="613">15h 18 612,9</text><text x="1734" y="836">9h 18 534,2</text></g>
    <text x="10" y="369">Clo M</text>
    <text x="3" y="931">IT-Finance.com - Temps Réel</text>
    <path d="M1738.500 119V933.500H1" fill="none" stroke={EDGE} />
    {prices.map((p) => {
      const y = Math.round(426 + (680 - p) * 2.838);
      return (
        <g key={p}>
          <path d={`M1739 ${y + 0.5}h3`} stroke={EDGE} />
          {p !== 700 && <text x="1745" y={y + 3} fontSize={p === 600 ? 11 : 10} fontWeight={p === 600 ? "bold" : "normal"}>18 {p}</text>}
        </g>
      );
    })}
    {timeTicks.map(([t, x, bold]) => (
      <g key={x}>
        <path d={`M${x + 0.5} 934v3`} stroke={EDGE} />
        <text x={x} y="946" textAnchor="middle" fontSize={bold ? 11 : 10} fontWeight={bold ? "bold" : "normal"}>{t}</text>
      </g>
    ))}
    <path d="M7.500 934v3" stroke={EDGE} />
    <rect x="1743.500" y="370.500" width="42" height="14" fill="#fff" stroke="#8ba0ab" />
    <text x="1745" y="383">18 699,2</text>
    <rect x="1743.500" y="355.500" width="55" height="18" fill="#f8cb18" stroke="#8d8a5c" />
    <text x="1744" y="370">1</text><text x="1750" y="370" fontSize="15">8 699,</text><text x="1792" y="366">2</text>
  </ChartSvg>
);

/* ------------------------------------------------------------------ */
/* Sections                                                            */
/* ------------------------------------------------------------------ */

const DocArrow = ({ c, up }: { c: string; up?: boolean }) => (
  <Icon w={12} h={12} box="0 0 12 12"><rect x=".5" y=".5" width="11" height="11" fill="#eef3f5" stroke="#92a4ae" /><path d={up ? "M6 2l4 4H7.500v4h-3V6H2z" : "M6 10l4-4H7.500V2h-3v4H2z"} fill={c} /></Icon>
);
const legendItems = ["Points pivots (M)", "Points pivots (S)", "Points pivots (J)", "Points pivots (4h)", "Prix médian (J)", "Plus Haut (J)", "Plus Bas (J)", "Plus Haut (M, Pré)", "Plus Bas (M, Pré)", "Plus Haut (S, Pré)", "Plus Bas (S, Pré)", "SuperTrend (3 10)"];

const OrderIcon = ({ flip }: { flip?: boolean }) => (
  <Icon w={23} h={23} box="0 0 23 23">
    <path d="M9 1h6l4 4v8H9z" fill="#f5f7f8" stroke="#7b8790" />
    <rect x="11.500" y="11.500" width="10" height="5" fill="#fff" stroke="#5b6770" /><rect x="11.500" y="16.500" width="10" height="5" fill="#fff" stroke="#5b6770" />
    <path d={flip ? "M6 1l4 4H7.500v5h-3V5H2z" : "M6 10l4-4H7.500V1h-3v5H2z"} fill={flip ? "#1f9a2c" : "#d9262c"} />
    <path d={flip ? "M6 21l4-4H7.500v-5h-3v5H2z" : "M6 12l4 4H7.500v5h-3v-5H2z"} fill={flip ? "#d9262c" : "#1f9a2c"} />
  </Icon>
);
const Wrench = () => (
  <Icon w={13} h={13} box="0 0 13 13"><path d="M11.500 3.200L9.500 5 8 3.500l2-2C8 .5 5.500 2 6 4.800L1.500 9.500c-1 1 1 3 2 2L8 7c3 .5 4.500-2 3.500-3.800z" fill="#fff" stroke="#111" /></Icon>
);

const taskIcons: [string, React.ReactNode, number?][] = [
  ["Vue des tâches", <path d="M5 7h9v10H5zM5 3v2h9V3M5 21v-2h9v2M18 3v18M16.500 9h3v3h-3z" stroke="#eee" strokeWidth="1.300" />],
  ["Bureau", <><path d="M2 16h20v4H2z" fill="#0a5fa8" /><rect x="4" y="1" width="16" height="17" fill="#1d9bea" /><path d="M10 17h11v6z" fill="#38b6ff" /></>],
  ["Spotify", <><circle cx="12" cy="12" r="11" fill="#1ed760" /><path d="M6 9c4-1.500 9-1 12.500 1M6.500 12.500c3.500-1 7.500-.5 10.500 1M7 15.800c3-.8 6-.4 8.500 1" stroke="#101010" strokeWidth="1.800" strokeLinecap="round" /></>],
  ["Scanner", <><path d="M3 5h9v5h11v8l-2 2H7l-6-4v-6h2z" fill="#d4d6d8" /><path d="M3 5h9v5H3z" fill="#f3f3f3" /><path d="M1 11h14l8 3" stroke="#9a9da0" /><path d="M8 16h14v3H8z" fill="#fafafa" /></>],
  ["Excel", <><path d="M9 1h13v21H9z" fill="#f4faf0" stroke="#76a558" /><path d="M14 5h6M14 9h6M14 13h6M14 17h6" stroke="#6fae4e" strokeWidth="2" /><rect x="1" y="4" width="14" height="15" fill="#3f8f3a" stroke="#d9ecd0" /><path d="M4.500 7.500l7 8M11.500 7.500l-7 8" stroke="#fff" strokeWidth="2" /></>],
  ["Word", <><path d="M9 1h13v21H9z" fill="#f2f6fc" stroke="#6a8cc6" /><path d="M15 6h5M15 10h5M15 14h5" stroke="#5c83c4" strokeWidth="1.500" /><rect x="1" y="4" width="15" height="15" fill="#2f5fb0" stroke="#d5e1f4" /><path d="M4 8l2 7 2.500-6 2.500 6 2-7" stroke="#fff" strokeWidth="1.600" /></>],
  ["Explorateur", <><path d="M1 4h8l2 2h11v15H1z" fill="#e9a92a" /><path d="M2 7h20v14H2z" fill="#fbd667" /><path d="M5 21v-8h14v8h-4v-4H9v4z" fill="#3f98d8" /></>],
  ["Calculatrice", <><rect x="4" y="0" width="17" height="24" fill="#8c98a3" /><rect x="6" y="2" width="13" height="4" fill="#35c1f1" /><path d="M6 9h3v3H6zM10.500 9h3v3h-3zM15.500 9h3v3h-3zM6 14h3v3H6zM10.500 14h3v3h-3zM6 19h3v3H6zM10.500 19h3v3h-3z" fill="#eef2f5" /><path d="M15.500 14h3v8h-3z" fill="#12408f" /></>],
  ["Paint", <><path d="M12 5C4 5 0 11 2 17c2 5 7 5 9 4s0-4 4-4 7-2 7-6-5-6-10-6z" fill="#dbeaf3" /><circle cx="6" cy="11" r="1.800" fill="#38a" /><circle cx="11" cy="8.500" r="1.800" fill="#e5c32b" /><circle cx="6" cy="16" r="1.800" fill="#c33" /><circle cx="17" cy="11" r="1.800" fill="#4b4" /><path d="M20 2l-5 18-3 2 1-4 5-17z" fill="#c98c4c" /><path d="M18 3l4-2 1 4-4 1z" fill="#8a4a2a" /></>],
  ["Assistant", <><path d="M12 1L1 12l3.500 3.500L15.500 4.500z" fill="#1c4b9c" /><path d="M6 17l8-8 2 2-8 8zM10 21l3-3-2-2" fill="#1c4b9c" /><path d="M15 5l8 7-11 11-2.500-2.500L18 12l-5-4.500z" fill="#17418c" /></>],
  ["Chrome", <><circle cx="12" cy="12" r="11" fill="#fbc116" /><path d="M12 12L2.500 6.500A11 11 0 0 1 21.500 6.500H12z" fill="#ea4335" /><path d="M12 12L2.500 6.500A11 11 0 0 0 11 23l5-9z" fill="#34a853" /><circle cx="12" cy="12" r="5.500" fill="#fff" /><circle cx="12" cy="12" r="4.300" fill="#4285f4" /></>, 1],
  ["ProRealTime", <><path d="M6 8v15" stroke="#a33" /><rect x="3" y="10" width="7" height="10" fill="#f47a7a" /><path d="M17 0v23" stroke="#2a3" /><rect x="13.500" y="4" width="7" height="14" fill="#55e655" /></>, 2],
];

const App = () => (
  <Screen>
    <Global />
    <Platform>
      <MenuBar>
        <Brand>
          <Candles s={15} />
          <div><BrandName>ProRealTime</BrandName>Complete</div>
        </Brand>
        <Menus>
          {["Fichier", "Affichage", "Trading", "Objets", "Réglages", "Aide"].map((m) => <button key={m}>{m}</button>)}
        </Menus>
        <CellButton $narrow aria-label="Lier"><Link /></CellButton>
        <Search>
          <SearchInput placeholder="Recherche ..." aria-label="Recherche" />
          <Lens />
        </Search>
        <Spacer />
        <CellButton $narrow $pressed aria-label="Dessin"><PencilChart /></CellButton>
        <IconButton aria-label="Drapeau">
          <Icon w={22} h={18} box="1 0 22 18"><path d="M5.500 3v13" stroke="#888" strokeWidth="1.500" /><path d="M6 3c4-2 5 2 13 0l-1 8c-6 2-8-2-12 0z" fill="#fcc72d" /></Icon>
        </IconButton>
        <Scene>3 écrans 8 indices 5 mn</Scene>
        <CellButton><Icon w={9} h={16} box="0 0 9 16"><rect x=".5" y=".5" width="8" height="15" fill="#52c85c" stroke="#3c8050" /><path d="M0 5.500h9M0 10.500h9" stroke="#3c8050" /></Icon>Push+</CellButton>
        <CellButton $narrow><Icon w={10} h={10} box="0 0 10 10"><rect x=".5" y=".5" width="9" height="9" fill="#8ee68e" stroke="#55946a" /></Icon>DealThru</CellButton>
        <Cell>
          <IconButton aria-label="Configurer"><Icon w={12} h={12} box="0 0 12 12"><rect x=".5" y=".5" width="11" height="11" stroke="#74868f" strokeDasharray="2 1" /><path d="M3 9l4-4M6 3l3 3" stroke="#5f717a" strokeWidth="2" /></Icon></IconButton>
          <IconButton aria-label="Épingler"><Icon w={12} h={12} box="0 0 12 12"><path d="M0 6h4v-.5h5v3H4V2v8" stroke="#6d8089" strokeWidth="1.600" /><path d="M10 3v6" stroke="#6d8089" strokeWidth="1.600" /></Icon></IconButton>
          <IconButton aria-label="Réduire"><Mini c="#6d8490" /></IconButton>
          <IconButton aria-label="Fermer"><Cross c="#6d8490" /></IconButton>
        </Cell>
      </MenuBar>

      <ToolBar>
        <ToolRow>
          {tools.map(([name, art], i) => name
            ? <IconButton key={i} aria-label={name} $pressed={i === 1}><Icon>{art}</Icon></IconButton>
            : <IconButton as="span" key={i}><Icon>{art}</Icon></IconButton>)}
        </ToolRow>
      </ToolBar>

      <TitleBar>
        <TitleCell $w={23}><Candles /></TitleCell>
        <TitleCell $w={17}><Link /></TitleCell>
        <TitleCell $w={43}><Pick $bold aria-label="Valeur"><option>DAX</option></Pick><Caret /></TitleCell>
        <TitleCell $w={73}><Pick $bold $big aria-label="Unité de temps"><option>5 minutes</option></Pick><Caret /></TitleCell>
        <TitleCell $w={67}><Pick aria-label="Historique"><option>400 unités</option></Pick><Caret /></TitleCell>
        <Quote>
          <InfoMark />
          <Green>18 699,2 (+0,59 % +110,5)</Green>
          <Icon w={8} h={8} box="0 0 8 8"><circle cx="4" cy="4" r="4" fill="#7e8389" /></Icon>
          <span>Allemagne 40 Cash (1€)</span>
        </Quote>
        <Spacer />
        <BottomButton $w={21} $white aria-label="Synchroniser">
          <Icon w={18} h={18}><path d="M4 8c1-5 5-7 9-5" stroke="#e04848" strokeWidth="3" /><path d="M0 7h9l-4.500 6z" fill="#e04848" /><path d="M16 12c-1 5-5 7-9 5" stroke="#28a838" strokeWidth="3" /><path d="M20 13h-9l4.500-6z" fill="#28a838" /></Icon>
        </BottomButton>
        <WindowButtons>
          <IconButton aria-label="Réduire le graphique"><Mini c="#3c5f8e" /></IconButton>
          <IconButton aria-label="Agrandir le graphique"><Maxi c="#3c5f8e" /></IconButton>
          <IconButton aria-label="Fermer le graphique"><Cross c="#3c5f8e" /></IconButton>
        </WindowButtons>
      </TitleBar>

      <TradeRow>
        <Stats>
          <Stat>Gain latent :<span>-</span></Stat>
          <Stat>Gain Jour :<span>-</span></Stat>
          <Stat>Trades jour : <span><Green>0</Green> / <b>0</b> / <Red>0</Red></span></Stat>
          <Stat>
            Position : <b>0</b>
            <Icon w={12} h={12} box="0 0 12 12"><rect x=".5" y=".5" width="11" height="11" fill="#f6f2f3" stroke="#d3d8dc" /><path d="M3 3l6 6M9 3l-6 6" stroke="#f0a8ac" strokeWidth="2.500" /></Icon>
            <span>&nbsp;/ &nbsp;<b>0</b></span>
            <Icon w={14} h={12} box="0 0 14 12"><circle cx="5" cy="5" r="3.500" stroke="#1c5fae" strokeWidth="2.500" /><circle cx="11" cy="9" r="2" stroke="#1c5fae" strokeWidth="1.500" /></Icon>
          </Stat>
        </Stats>
        <OrderPanel onSubmit={(e) => e.preventDefault()}>
          <Tools $w={18}>
            <SquareButton type="button" aria-label="Options d'ordre"><Wrench /></SquareButton>
            <IconButton type="button" aria-label="Clavier"><Icon w={17} h={14} box="0 0 17 14"><rect width="17" height="14" rx="2" fill="#2c62c0" /><path d="M2 4h13M2 7h13" stroke="#fff" strokeWidth="2" strokeDasharray="2 1" /><path d="M5 10.500h7" stroke="#fff" strokeWidth="1.500" /></Icon></IconButton>
          </Tools>
          <Stack $w={45}><Caption htmlFor="qty">Qté</Caption><Qty id="qty" defaultValue="2" /></Stack>
          <Rule />
          <Stack $w={28}><Caption as="span">Limite</Caption><OrderButton type="button" aria-label="Limite"><OrderIcon /></OrderButton></Stack>
          <Rule />
          <Stack $w={28}><Caption as="span">Stop</Caption><OrderButton type="button" aria-label="Stop"><OrderIcon flip /></OrderButton></Stack>
          <Rule />
          <Stack $w={76}><Caption as="span">Vendre <InfoMark /></Caption><PriceButton type="button" $c="#e04a4a"><Tiny $low>1</Tiny>8 695,<Tiny>7</Tiny></PriceButton></Stack>
          <Stack $w={76}><Caption as="span">Acheter <InfoMark /></Caption><PriceButton type="button" $c="#22b02e"><Tiny $low>1</Tiny>8 702,<Tiny>7</Tiny></PriceButton></Stack>
          <Rule />
          <Guards>
            {[["L", "10"], ["S", "40"]].map(([k, v]) => (
              <Guard key={k}><GuardBox type="checkbox" id={`guard-${k}`} /><GuardLabel htmlFor={`guard-${k}`}>{k}</GuardLabel><GuardValue defaultValue={v} aria-label={`${k} en points`} />pts</Guard>
            ))}
          </Guards>
        </OrderPanel>
      </TradeRow>

      <ChartArea>
        <Chart />
        <Overlay>
          <Legend>
            <LegendItem as="button" aria-label="Vendre au marché"><DocArrow c="#d83a3a" /></LegendItem>
            <LegendItem as="button" aria-label="Acheter au marché"><DocArrow c="#2a9a3a" up /></LegendItem>
            <LegendItem><PriceBox type="checkbox" defaultChecked />Prix</LegendItem>
            <LegendItem><LegendBox type="checkbox" defaultChecked />Clôture (M)</LegendItem>
            {legendItems.map((t) => <LegendItem key={t}><LegendBox type="checkbox" />{t}</LegendItem>)}
          </Legend>
          <DayRange>Jour :+Haut 18 710,3 +Bas 18 513,7</DayRange>
        </Overlay>
      </ChartArea>

      <BottomBar>
        <BottomButton $w={28} aria-label="Objets"><PencilChart /></BottomButton>
        <CellButton $narrow aria-label="Plus d'objets"><Caret /></CellButton>
        <BottomButton $w={28} $white aria-label="Indicateurs">
          <Icon><path d="M0 4c5-5 8 8 19 3M0 9c6 4 9-9 19 1" stroke="#3a3" strokeWidth="1.300" /><path d="M0 10C8 0 12 12 19 4" stroke="#c44" /><path d="M1 19v-6h3v2h3v-3h4v4h3v-4h4v7z" fill="#22a32e" /><path d="M4 15h3v4H4zM11 16h3v3h-3z" fill="#c22" /></Icon>
        </BottomButton>
        <BottomButton $w={14} $white aria-label="Plus d'indicateurs"><Caret /></BottomButton>
        <Share><Icon w={14} h={14} box="0 0 14 14"><path d="M11 2.500L3 7l8 4.500" stroke="#fff" strokeWidth="1.500" /><circle cx="3" cy="7" r="2.500" fill="#fff" /><circle cx="11" cy="2.500" r="2.300" fill="#fff" /><circle cx="11" cy="11.500" r="2.300" fill="#fff" /></Icon>Partager</Share>
        <BottomButton $w={24} aria-label="Messages"><Icon w={17} h={17}><rect x="1" y="1" width="12" height="11" fill="#f5f7f8" stroke="#98a8b0" /><path d="M5 6h14v9h-4l1 4-5-4H5z" fill="#2a62c8" /><path d="M8 10h8" stroke="#fff" strokeWidth="1.500" strokeDasharray="2 1" /></Icon></BottomButton>
        <BottomButton $w={23} aria-label="Journal"><Icon w={16} h={17}><rect x="3" y="1" width="15" height="18" fill="#f6f6f6" stroke="#555" /><path d="M5 5h7M5 9h9M5 13h6M5 16h8" stroke="#333" strokeWidth="1.800" /><path d="M13 3l4 5V3z" fill="#d33" /><path d="M12 17l5-6v6z" fill="#2a2" /></Icon></BottomButton>
        <BottomButton $w={23} aria-label="Carnet"><Icon w={16} h={17}><path d="M0 1h10v4H0zM4 5h6v4H4zM0 10h10v4H0zM3 15h7v4H3z" fill="#34c23e" stroke="#14621c" strokeWidth=".8" /><path d="M11 2h6v4h-6zM11 6h9v4h-9zM11 11h9v4h-9zM11 15h5v4h-5z" fill="#e04040" stroke="#7a1414" strokeWidth=".8" /></Icon></BottomButton>
        <BottomButton $w={24} aria-label="Fenêtres"><Icon w={18} h={17}><rect x="1" y="1" width="13" height="11" fill="#fff" stroke="#2464b4" strokeWidth="1.600" /><path d="M1 3h13" stroke="#2464b4" strokeWidth="2.500" /><rect x="6" y="8" width="13" height="11" fill="#fff" stroke="#2464b4" strokeWidth="1.600" /><path d="M6 9.500h13" stroke="#2464b4" strokeWidth="2.500" /><path d="M8 16l3-3 3 3 4-3" stroke="#d33" /></Icon></BottomButton>
        <BottomButton $w={23} aria-label="Style"><Icon w={17} h={17}><rect x="1" y="8" width="7" height="9" fill="#e05050" stroke="#7a1a1a" /><path d="M16 0v20" stroke="#176a20" /><rect x="12.500" y="3" width="7" height="11" fill="#3fd04a" stroke="#176a20" /><path d="M3 17l9-9c-1-3 2-5 4-4l-2 2 1 2 2-1c0 3-2 4-4 3l-8 9z" fill="#fff" stroke="#111" /></Icon></BottomButton>
        <BottomButton $w={16} aria-label="Replier">«</BottomButton>
        <ScrollBar>
          <ScrollEnd aria-label="Défiler à gauche"><Icon w={5} h={8} box="0 0 5 8"><path d="M5 0v8L0 4z" fill="#111" /></Icon></ScrollEnd>
          <Track><Thumb /></Track>
          <ScrollEnd aria-label="Défiler à droite"><Icon w={5} h={8} box="0 0 5 8"><path d="M0 0v8l5-4z" fill="#111" /></Icon></ScrollEnd>
        </ScrollBar>
        {[0, 1, 2].map((k) => (
          <BottomButton key={k} $w={24} aria-label={["Ajuster", "Zoom arrière", "Zoom avant"][k]}>
            <Icon w={18} h={18}>
              <path d="M11 11l6 7" stroke="#111" strokeWidth="3" /><circle cx="8" cy="7" r="5.500" fill={k ? "#f5f8fa" : "#c5c9c4"} stroke="#222" strokeWidth="1.300" />
              {k > 0 && <path d="M5 7h6" stroke="#1224e0" strokeWidth="2" />}
              {k === 2 && <path d="M8 4v6" stroke="#1224e0" strokeWidth="2" />}
              {k === 0 && <path d="M18 1v10M16 3l2-2 2 2M16 9l2 2 2-2M0 18h11M2 16l-2 2 2 2M9 16l2 2-2 2" stroke="#1224e0" strokeWidth="1.400" />}
            </Icon>
          </BottomButton>
        ))}
        <BottomButton $w={24} aria-label="Aller à la fin"><Icon w={18} h={18}><path d="M0 2h20v5H0z" fill="#dbe4e8" /><path d="M1 5h18" stroke="#333" strokeWidth="2" strokeDasharray="3 1.500" /><path d="M8.500 9h3v4H15l-5 5-5-5h3.500z" fill="#1b64c8" /></Icon></BottomButton>
      </BottomBar>
    </Platform>

    <TaskBar>
      <TaskButton aria-label="Démarrer"><Icon w={17} h={17} box="0 0 17 17"><path d="M1 3l6-1v6H1zM8 2l8-1v7H8zM1 9h6v6l-6-1zM8 9h8v7l-8-1z" fill="#fff" /></Icon></TaskButton>
      <TaskSearch><Lens s={17} /><TaskInput placeholder="Taper ici pour rechercher" aria-label="Taper ici pour rechercher" /></TaskSearch>
      {taskIcons.map(([name, art, state]) => (
        <TaskButton key={name} aria-label={name} $line={!!state} $active={state === 2}><Icon w={name === "Vue des tâches" ? 18 : 23} h={name === "Vue des tâches" ? 18 : 23} box="0 0 24 24">{art}</Icon></TaskButton>
      ))}
      <Spacer />
      <Weather>
        <Icon w={24} h={24} box="0 0 24 24"><path d="M5 22c-6 0-5-8 0-8 1-7 11-7 12-1 8 0 7 9 1 9z" fill="#c4dbf7" /><circle cx="17" cy="6" r="6" fill="#d03a2e" /><text x="15" y="10" fontSize="10" fill="#fff" fontFamily={UI}>1</text></Icon>
        <span>16°C</span><span>Ciel couvert</span>
      </Weather>
      <Tray>
        <TrayButton aria-label="Icônes cachées"><Icon w={12} h={12} box="0 0 12 12"><path d="M1 9l5-5 5 5" stroke="#eee" strokeWidth="1.400" /></Icon></TrayButton>
        <TrayButton aria-label="Caméra"><Icon w={14} h={18} box="0 0 14 18"><rect x="2" y="5" width="7" height="8" rx="1" stroke="#eee" strokeWidth="1.400" /><path d="M9 8l3-2v6l-3-2M3 2c2-1 5-1 7 0M3 16c2 1 5 1 7 0" stroke="#eee" /></Icon></TrayButton>
        <TrayButton aria-label="Bluetooth"><Icon w={12} h={16} box="0 0 12 16"><rect width="12" height="16" rx="6" fill="#0a84f0" /><path d="M3 5l6 6-3 3V2l3 3-6 6" stroke="#fff" /></Icon></TrayButton>
        <TrayButton aria-label="OneDrive"><Icon w={16} h={12} box="0 0 16 12"><path d="M4 11c-5 0-5-6-1-6 2-6 8-5 9-1 5 0 5 7 0 7z" fill="#d8d8d8" /></Icon></TrayButton>
        <TrayButton aria-label="Wi-Fi"><Icon w={14} h={14} box="0 0 14 14"><path d="M1 13C1 6 6 1 13 1M4 13c0-5 4-9 9-9M7.500 13c0-3 2.500-5.500 5.500-5.500" stroke="#ddd" strokeWidth="1.200" /><circle cx="11.500" cy="12" r="1.500" fill="#fff" /></Icon></TrayButton>
        <TrayButton aria-label="Volume"><Icon w={16} h={14} box="0 0 16 14"><path d="M1 5h2l4-4v12L3 9H1zM9 4c1 2 1 4 0 6M11 3c2 3 2 5 0 8M13 1c3 4 3 8 0 12" stroke="#eee" /></Icon></TrayButton>
        <TrayButton aria-label="Dropbox"><Icon w={14} h={16} box="0 0 14 16"><path d="M4 1l3 2-3 2-3-2zM10 1l3 2-3 2-3-2zM10 6l3 2-3 2-3-2zM11 11l2 1-2 2z" fill="#eee" /><circle cx="4.500" cy="11" r="4.500" fill="#d8152a" /><text x="2" y="14" fontSize="8" fill="#fff" fontFamily={UI}>3</text></Icon></TrayButton>
        <Clock>09:14<br />26/05/2024</Clock>
        <TaskButton aria-label="Notifications"><Icon w={17} h={18} box="0 0 17 18"><path d="M1 1h15v11h-7l-4 4v-4H1z" fill="#fff" /><path d="M4 4h9M4 6.500h9M4 9h6" stroke="#222" /><circle cx="13" cy="12" r="4" fill="#101010" stroke="#ddd" /></Icon></TaskButton>
      </Tray>
      <ShowDesktop aria-label="Afficher le bureau" />
    </TaskBar>
  </Screen>
);

export default App;
